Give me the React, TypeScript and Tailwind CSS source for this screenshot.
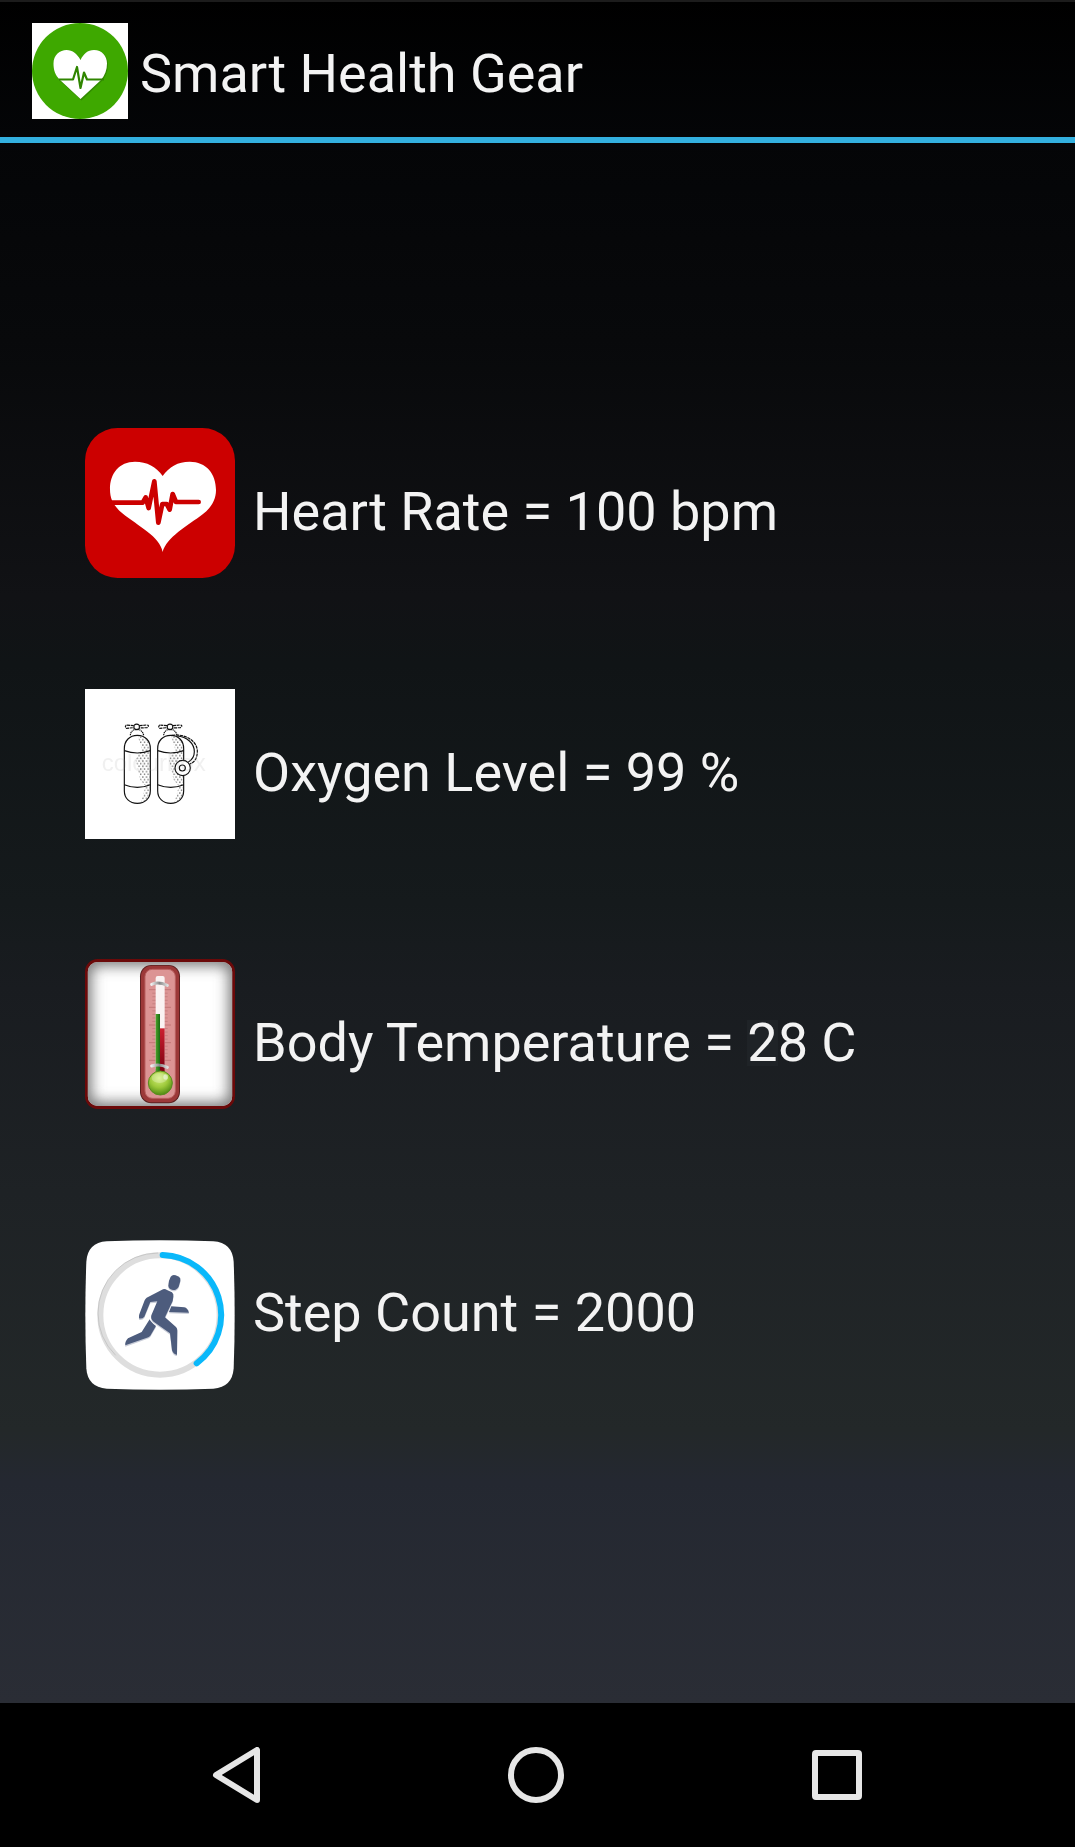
import type { ReactNode } from 'react';

const LogoIcon = () => (
  <svg viewBox="0 0 96 96" className="size-24 shrink-0" aria-hidden="true">
    <rect width="96" height="96" fill="#fff" />
    <circle cx="48" cy="48" r="48" fill="#3ea800" />
    <path
      d="M49.5 77.5 28 58C24 53 23 48 23 41 23 33 29 28 36 28c6 0 11 4 13.500 10C52 32 56 28 63 28c8 0 13 6 13 13 0 7-2 12-6 17z"
      fill="#2b7a00"
      opacity=".6"
    />
    <path
      d="M48.500 76 28 57C23 52 21.500 47 21.500 40.500 21.500 32 28 27 34.500 27c6 0 11 4 14 10 3-6 7-10 13.500-10 8 0 13 6 13 13.500 0 6.500-2 11.500-6 16.500z"
      fill="#fff"
    />
    <path
      d="M27 56.500H41l4-12.500 3.500 21 3.500-15.500 3 7H72"
      fill="none"
      stroke="#2f8500"
      strokeWidth="2.200"
      strokeLinejoin="round"
    />
  </svg>
);

const HeartIcon = () => (
  <svg viewBox="30 30 450 450" className="size-[150px] shrink-0" aria-hidden="true">
    <rect x="30" y="30" width="450" height="450" rx="98" fill="#cc0000" />
    <path
      d="M263 402C255 356 190 325 142 286 116 264 105 244 105 214 105 165 133 131 180 131 216 131 244 146 263 174 283 146 308 131 344 131 394 131 423 167 423 216 423 247 407 270 384 288 338 323 274 358 263 402Z"
      fill="#fff"
    />
    <path
      d="M105 254H203L212 238 221 270 238 190 250 314 262 258H275L284 275 293 228 303 252H371"
      fill="none"
      stroke="#cc0000"
      strokeWidth="14"
      strokeLinecap="round"
      strokeLinejoin="round"
    />
  </svg>
);

const Tank = ({ x }: { x: number }) => (
  <g transform={`translate(${x} 0)`} fill="none" stroke="#111" strokeWidth="3.500">
    <path d="M2 206C2 182 18 166 41 166S80 182 80 206V332C80 355 64 370 41 370S2 355 2 332Z" fill="#fff" />
    <path
      d="M42 168C64 170 78 184 78 206V332C78 352 66 366 52 368L66 318 50 300 36 240 46 218 56 212Z"
      fill="url(#tankDots)"
      stroke="none"
    />
    <path d="M2 212Q41 226 80 212M2 314Q41 330 80 314" />
    <path d="M20 166Q21 150 38 148Q56 148 60 166" strokeDasharray="4 2" />
    <path d="M30 137 8 135Q2 140 8 145L30 143M48 137 68 135Q80 136 70 143L48 144" strokeDasharray="9 2" />
    <path d="M31 136Q39 129 47 136V145Q39 153 31 145Z" />
  </g>
);

const OxygenIcon = () => (
  <svg viewBox="30 27 450 450" className="size-[150px] shrink-0" aria-hidden="true">
    <defs>
      <pattern id="tankDots" width="11" height="16" patternUnits="userSpaceOnUse">
        <rect x="1" y="1" width="3" height="4" fill="#333" />
        <rect x="6" y="9" width="3" height="4" fill="#333" />
      </pattern>
    </defs>
    <rect x="30" y="27" width="450" height="450" fill="#fff" />
    <Tank x={146} />
    <Tank x={246} />
    <g fill="none" stroke="#111" strokeWidth="3.500">
      <path d="M290 166C332 160 367 184 367 214 367 235 358 248 344 252" strokeDasharray="10 2" />
      <path d="M306 168C336 170 358 190 358 215 358 230 350 240 340 246" />
      <circle cx="323" cy="264" r="23" fill="#fff" />
      <circle cx="322" cy="264" r="9" />
    </g>
    <text
      x="80"
      y="273"
      fontSize="72"
      fontFamily="Liberation Sans, sans-serif"
      fill="#999"
      opacity=".14">
      colourbox
    </text>
  </svg>
);

const ticks = Array.from({ length: 21 }, (_, i) => ({
  y: 119 + i * 10.6,
  major: i % 5 === 0,
}));

const ThermometerIcon = () => (
  <svg viewBox="30 27 450 450" className="size-[150px] shrink-0" aria-hidden="true">
    <defs>
      <filter id="edgeBlur" x="-20%" y="-20%" width="140%" height="140%">
        <feGaussianBlur stdDeviation="20" />
      </filter>
      <clipPath id="panelClip">
        <rect x="38" y="36" width="434" height="432" rx="30" />
      </clipPath>
      <radialGradient id="bulb" cx=".45" cy=".3" r=".7">
        <stop offset="0" stopColor="#d4ef7a" />
        <stop offset=".55" stopColor="#9cc83a" />
        <stop offset="1" stopColor="#4f8a12" />
      </radialGradient>
      <linearGradient id="greenBar">
        <stop offset="0" stopColor="#4fa32b" />
        <stop offset="1" stopColor="#176b12" />
      </linearGradient>
      <linearGradient id="redBar" x2="0" y2="1">
        <stop offset="0" stopColor="#cc2030" />
        <stop offset="1" stopColor="#7a0010" />
      </linearGradient>
      <linearGradient id="clamp">
        <stop offset="0" stopColor="#eee" />
        <stop offset=".5" stopColor="#888" />
        <stop offset="1" stopColor="#ddd" />
      </linearGradient>
    </defs>
    <rect x="30" y="27" width="450" height="450" rx="38" fill="#6b0909" />
    <g clipPath="url(#panelClip)">
      <rect x="38" y="36" width="434" height="432" fill="#fff" />
      <rect
        x="22"
        y="20"
        width="466"
        height="464"
        rx="50"
        fill="none"
        stroke="#777"
        strokeWidth="54"
        filter="url(#edgeBlur)"
      />
    </g>
    <rect x="195" y="45" width="120" height="415" rx="34" fill="#5c2020" />
    <rect x="198" y="47" width="114" height="410" rx="32" fill="#9c3838" />
    <rect x="210" y="58" width="91" height="387" rx="22" fill="#dc9494" stroke="#b96060" strokeWidth="3" />
    {ticks.map(({ y, major }) => (
      <path
        key={y}
        d={major ? `M222 ${y}H288` : `M232 ${y}H278`}
        stroke={major ? '#b86868' : '#bd7777'}
        strokeWidth="2"
      />
    ))}
    <rect x="242" y="78" width="27" height="284" rx="6" fill="#faf2f2" />
    <path d="M242 192H255V366H242Z" fill="url(#greenBar)" />
    <path d="M255 235H269V366H255Z" fill="url(#redBar)" />
    <path
      d="M230 103Q250 94 277 106M230 348Q254 340 277 352"
      fill="none"
      stroke="url(#clamp)"
      strokeWidth="9"
      strokeLinecap="round"
    />
    <circle cx="256" cy="399" r="36" fill="url(#bulb)" stroke="#5a8a20" strokeWidth="3" />
    <ellipse cx="254" cy="384" rx="24" ry="15" fill="#fff" opacity=".25" />
    <ellipse cx="272" cy="381" rx="7" ry="8" fill="#fff" opacity=".5" />
  </svg>
);

const Runner = ({ fill, transform }: { fill: string; transform?: string }) => (
  <g fill={fill} transform={transform}>
    <path d="M287 140Q292 133 302 136L312 140Q318 144 316 153L311 170Q304 181 294 180 282 178 280 168 279 154 287 140Z" />
    <path d="M215 203 264 178Q270 176 276 180L291 187Q297 192 295 200L293 213 270 262 303 291Q307 295 307 301L306 374Q297 375 291 361L285 310 236 275Q226 267 229 256L247 214 226 216 208 260Q201 268 192 265 191 260 193 253L209 211Q211 206 215 203Z" />
    <path d="M289 229 328 232Q338 234 342 248L282 246Z" />
    <path d="M224 268Q226 275 243 288L226 317Q222 321 216 323L151 346Q149 336 159 325L200 306Z" />
  </g>
);

const StepsIcon = () => (
  <svg viewBox="30 30 450 450" className="size-[150px] shrink-0" aria-hidden="true">
    <path
      d="M95 34Q255 28 415 34Q472 38 476 95Q482 255 476 415Q472 472 415 476Q255 482 95 476Q38 472 34 415Q28 255 34 95Q38 38 95 34Z"
      fill="#fff"
    />
    <circle cx="255" cy="255" r="179" fill="none" stroke="#dedede" strokeWidth="18" />
    <path
      d="M128 382A180 180 0 0 1 75 255A180 180 0 0 1 255 75"
      fill="none"
      stroke="#b8b8b8"
      strokeWidth="3"
      transform="translate(-6 -6)"
      opacity=".6"
    />
    <path
      d="M263 75A180 180 0 0 1 365 400"
      fill="none"
      stroke="#0ab8fa"
      strokeWidth="18"
      strokeLinecap="round"
    />
    <Runner fill="#c9cdd8" transform="translate(0 4)" />
    <Runner fill="#4d5c7d" />
  </svg>
);

type MetricProps = {
  icon: ReactNode;
  className?: string;
  textClassName?: string;
  children: ReactNode;
};

const Metric = ({ icon, className = '', textClassName = 'pt-[18px]', children }: MetricProps) => (
  <li className={`flex items-center gap-[18px] ${className}`}>
    {icon}
    <p className={`text-[54px] leading-[64px] ${textClassName}`}>{children}</p>
  </li>
);

const navButton = 'flex h-36 items-center justify-center';

const App = () => {
  return (
    <div className="flex min-h-screen flex-col bg-black font-[Roboto,sans-serif] text-[#f3f3f3]">
      <div className="flex flex-1 flex-col bg-[linear-gradient(to_bottom,#000_0%,#040507_8%,#08090b_20%,#111215_35%,#101416_39%,#151a1c_53%,#191c20_58%,#1e2225_70%,#232829_84%,#242831_87%,#2a2d35_100%)]">
        <header className="flex h-[143px] items-center gap-3 border-t-2 border-b-6 border-t-[#1c1c1c] border-b-[#33b0df] px-8 pt-[3px]">
          <LogoIcon />
          <h1 className="pt-[6px] text-[54px] leading-[64px]">Smart Health Gear</h1>
        </header>

        <main className="flex-1 px-[85px] pt-[285px] pb-10">
          <ul>
            <Metric icon={<HeartIcon />}>Heart Rate = 100 bpm</Metric>
            <Metric icon={<OxygenIcon />} className="mt-[111px]">
              Oxygen Level = 99 %
            </Metric>
            <Metric icon={<ThermometerIcon />} className="mt-[120px]">
              Body Temperature = <span className="inline-block bg-[#1f2327] leading-[46px]">2</span>8 C
            </Metric>
            <Metric icon={<StepsIcon />} className="mt-[131px]" textClassName="pb-1">
              Step Count = 2000
            </Metric>
          </ul>
        </main>
      </div>

      {/* System navigation */}
      <nav className="grid grid-cols-3 bg-black pr-[88px] pl-[86px]">
        <button type="button" aria-label="Back" className={navButton}>
          <svg viewBox="0 0 48 56" className="h-14 w-12" fill="none" stroke="#e6e6e6" strokeWidth="6" strokeLinejoin="round">
            <path d="M45 3V53L4 28Z" />
          </svg>
        </button>
        <button type="button" aria-label="Home" className={navButton}>
          <svg viewBox="0 0 56 56" className="size-14" fill="none" stroke="#e6e6e6" strokeWidth="6">
            <circle cx="28" cy="28" r="25" />
          </svg>
        </button>
        <button type="button" aria-label="Recent apps" className={navButton}>
          <svg viewBox="0 0 50 50" className="size-[50px]" fill="none" stroke="#e6e6e6" strokeWidth="6" strokeLinejoin="round">
            <rect x="3" y="3" width="44" height="44" rx="1" />
          </svg>
        </button>
      </nav>
    </div>
  );
};

export default App;
